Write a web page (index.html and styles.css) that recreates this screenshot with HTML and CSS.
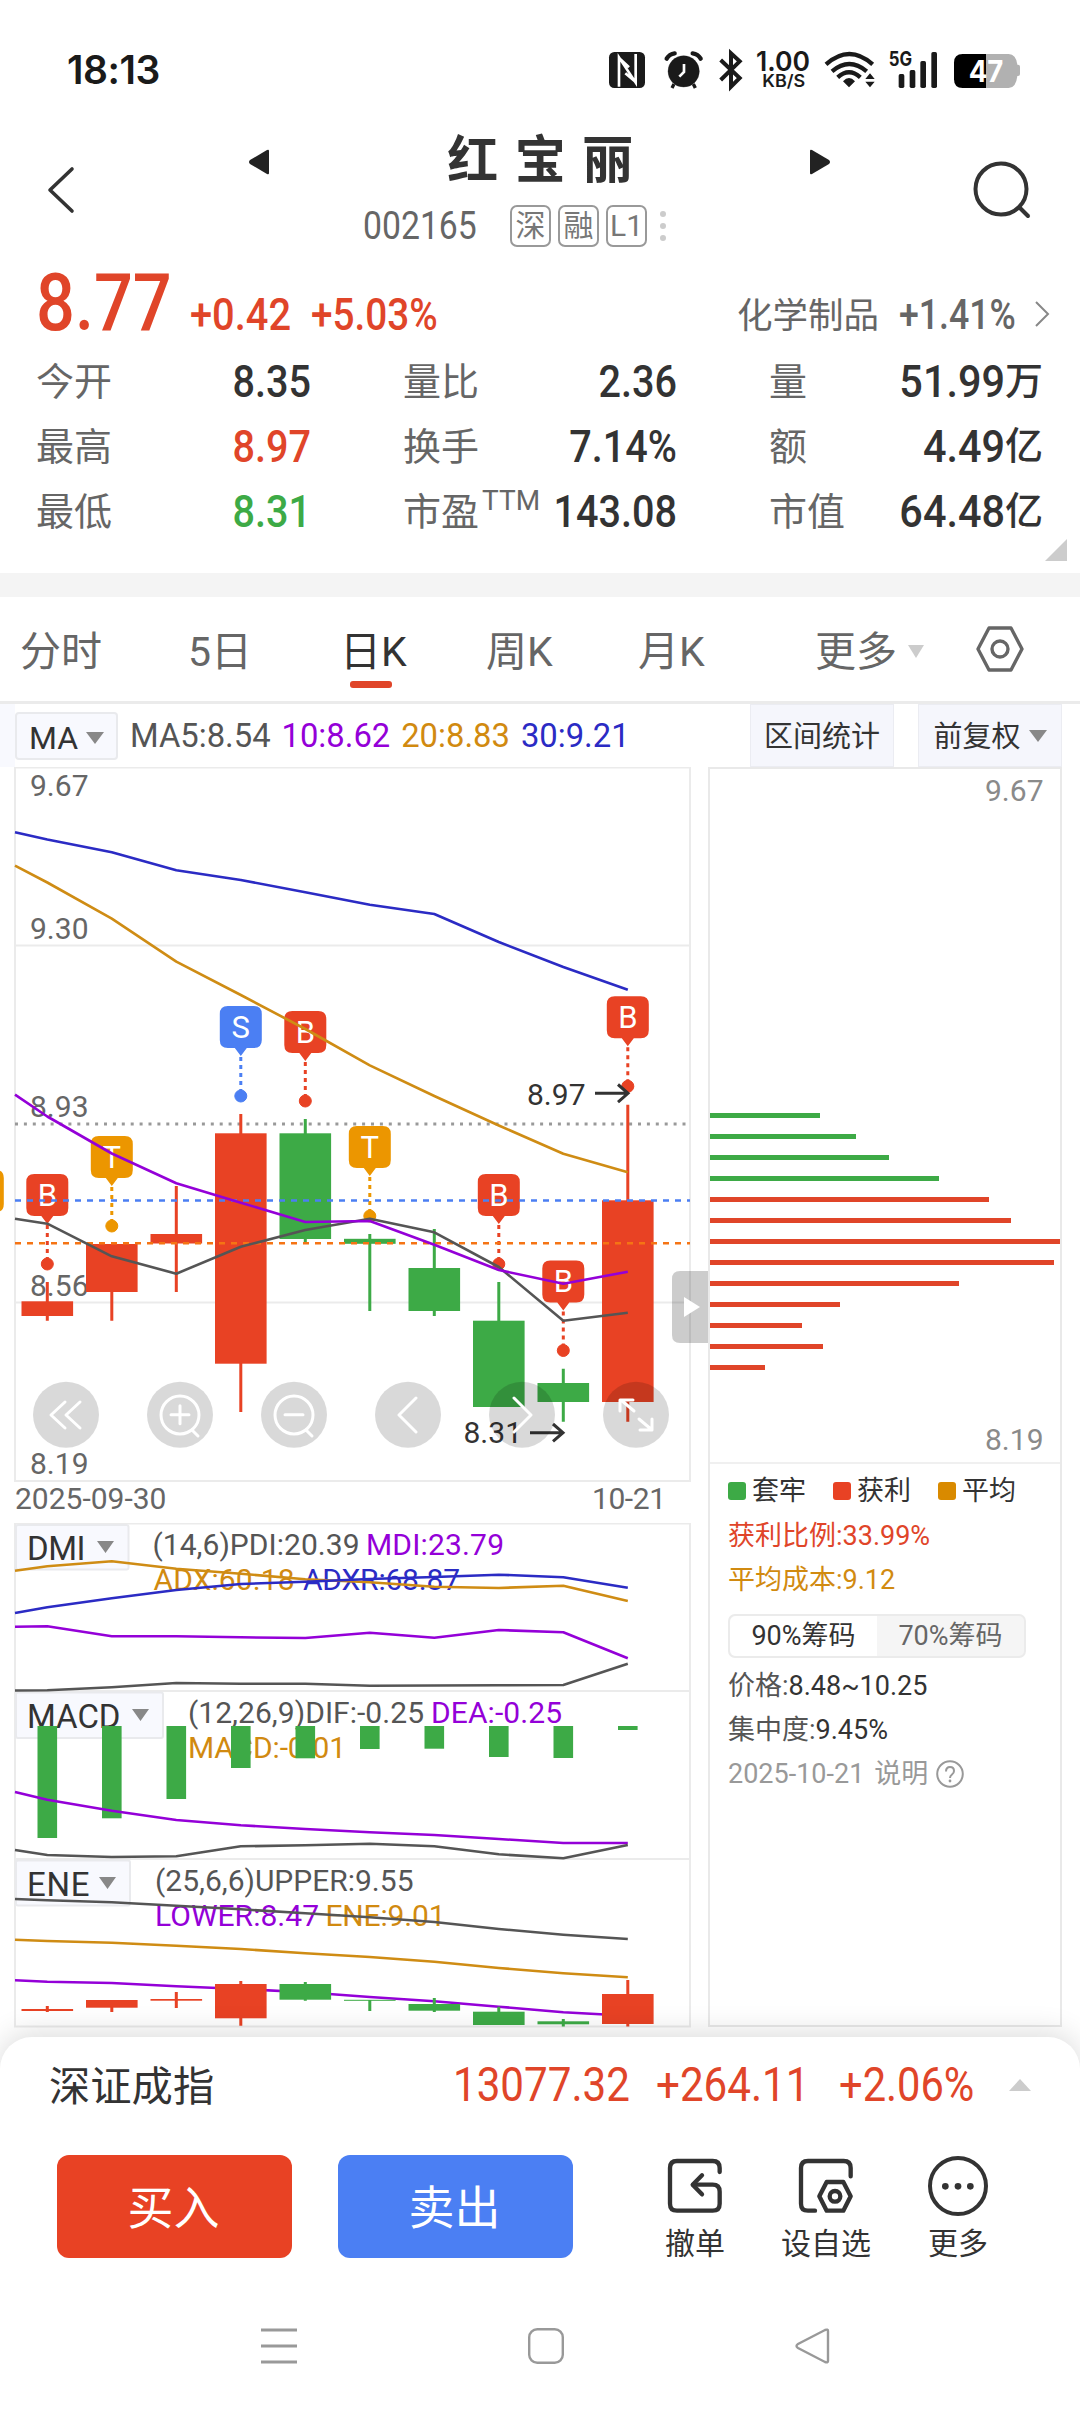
FILE: index.html
```html
<!DOCTYPE html>
<html lang="zh-CN">
<head>
<meta charset="utf-8">
<title>红宝丽 002165</title>
<link rel="stylesheet" href="styles.css">
</head>
<body>
<div class="status">
  <span class="clock">18:13</span>
  <svg class="status-icons" viewBox="0 0 1320 180" width="440" height="60">
    <rect x="27" y="36" width="108" height="108" rx="16" fill="#1a1a1a"/>
    <path d="M57 140V52l50 76V42M57 54l30 28M107 126L76 100" fill="none" stroke="#fff" stroke-width="8"/>
    <g fill="#1a1a1a" stroke="#1a1a1a">
      <circle cx="251" cy="94" r="47"/>
      <path d="M200 56q8-14 24-16M302 56q-8-14-24-16" fill="none" stroke-width="13" stroke-linecap="round"/>
      <path d="M222 132l-6 12M280 132l6 12" stroke-width="10"/>
    </g>
    <path d="M252 72v24l-14 14" fill="none" stroke="#fff" stroke-width="8"/>
    <path d="M362 60l57 54-26 26V40l26 24-57 56" fill="none" stroke="#1a1a1a" stroke-width="12"/>
    <g fill="#1a1a1a" class="st-text">
      <text x="468" y="92" font-size="80" font-weight="600" textLength="162" lengthAdjust="spacingAndGlyphs">1.00</text>
      <text x="487" y="141" font-size="51" font-weight="600" textLength="129" lengthAdjust="spacingAndGlyphs">KB/S</text>
      <text x="866" y="79" font-size="60" font-weight="700" textLength="70" lengthAdjust="spacingAndGlyphs">5G</text>
    </g>
    <g fill="none" stroke="#1a1a1a" stroke-width="13">
      <path d="M678 73q70-62 140 0M696 94q52-44 104 0M713 112q34-30 68 0"/>
    </g>
    <path d="M729 124q18-20 36 0l-18 18zM796 117l14-17 14 17zM796 125l14 17 14-17z" fill="#1a1a1a"/>
    <g fill="#1a1a1a"><rect x="896" y="102" width="17" height="42" rx="5"/><rect x="929" y="90" width="17" height="54" rx="5"/><rect x="961" y="63" width="17" height="81" rx="5"/><rect x="994" y="36" width="17" height="108" rx="5"/></g>
    <path d="M1158 42h68q22 0 26 32h2q6 0 6 6v22q0 6-6 6h-2q-4 36-26 36h-68z" fill="#b1b1b1"/>
    <path d="M1158 42h-70q-26 0-26 26v50q0 26 26 26h70z" fill="#000"/>
    <text class="st-text" x="1106" y="127" font-size="90" font-weight="700" fill="#fff" textLength="104" lengthAdjust="spacingAndGlyphs">47</text>
  </svg>
</div>

<header class="head">
  <svg class="back" viewBox="0 0 30 50" width="30" height="50"><path d="M26 4L4 25l22 21" fill="none" stroke="#333" stroke-width="3.6" stroke-linecap="round" stroke-linejoin="round"/></svg>
  <div class="head-mid">
    <div class="title-row">
      <svg viewBox="0 0 22 26" width="22" height="26"><path d="M21 2v22q0 2-2 1L2 15q-2-2 0-4L19 1q2-1 2 1z" fill="#222"/></svg>
      <h1>红宝丽</h1>
      <svg viewBox="0 0 22 26" width="22" height="26"><path d="M1 2v22q0 2 2 1l17-10q2-2 0-4L3 1Q1 0 1 2z" fill="#222"/></svg>
    </div>
    <div class="code-row">
      <span class="code">002165</span>
      <span class="tag">深</span><span class="tag">融</span><span class="tag">L1</span>
      <svg class="dots" viewBox="0 0 6 30" width="6" height="30"><g fill="#ccc"><circle cx="3" cy="3" r="3"/><circle cx="3" cy="15" r="3"/><circle cx="3" cy="27" r="3"/></g></svg>
    </div>
  </div>
  <svg class="search" viewBox="0 0 60 60" width="60" height="60"><g fill="none" stroke="#333" stroke-width="4" stroke-linecap="round"><circle cx="29" cy="29" r="25.5"/><path d="M48 48l8 8"/></g></svg>
</header>

<section class="quote">
  <div class="price-row">
    <span class="price red">8.77</span>
    <span class="chg red">+0.42</span>
    <span class="pct red">+5.03%</span>
    <span class="sector">化学制品</span>
    <span class="sector-pct">+1.41%</span>
    <svg class="chev" viewBox="0 0 16 28" width="16" height="28"><path d="M2 2l12 12L2 26" fill="none" stroke="#888" stroke-width="2"/></svg>
  </div>
  <div class="stats">
    <div class="stat"><span>今开</span><b>8.35</b></div>
    <div class="stat"><span>量比</span><b>2.36</b></div>
    <div class="stat"><span>量</span><b>51.99</b><i>万</i></div>
    <div class="stat"><span>最高</span><b class="red">8.97</b></div>
    <div class="stat"><span>换手</span><b>7.14%</b></div>
    <div class="stat"><span>额</span><b>4.49</b><i>亿</i></div>
    <div class="stat"><span>最低</span><b class="green">8.31</b></div>
    <div class="stat"><span>市盈<sup>TTM</sup></span><b>143.08</b></div>
    <div class="stat"><span>市值</span><b>64.48</b><i>亿</i></div>
  </div>
  <div class="corner"></div>
</section>

<nav class="tabs">
  <span>分时</span><span>5日</span><span class="on">日K</span><span>周K</span><span>月K</span>
  <span class="more">更多<i class="tri light"></i></span>
  <svg viewBox="0 0 48 46" width="48" height="46"><g fill="none" stroke="#666" stroke-width="3.4" stroke-linejoin="round"><path d="M13 2h22l11 21-11 21H13L2 23z"/><circle cx="24" cy="23" r="8"/></g></svg>
</nav>

<div class="toolbar">
  <div class="edge"></div>
  <div class="pick">MA<i class="tri"></i></div>
  <div class="ma"><span class="c-gray">MA5:8.54</span><span class="c-purple">10:8.62</span><span class="c-gold">20:8.83</span><span class="c-blue">30:9.21</span></div>
  <div class="tool">区间统计</div>
  <div class="tool adj">前复权<i class="tri"></i></div>
</div>

<main class="charts">
  <div class="left">
    <svg class="kline" viewBox="0 767 709 756" width="709" height="756">
      <defs>
        <g id="badge"><path d="M-13-45h26q8 0 8 8v26q0 8-8 8H6L0 5-6-3h-7q-8 0-8-8v-26q0-8 8-8z" stroke="none"/><path class="stem" d="M0 6V40"/><circle cy="45" r="6"/></g>
        <g id="disc"><circle r="33" fill="#000" fill-opacity=".15"/></g>
      </defs>
      <g class="frame"><rect x="15" y="767.5" width="675" height="713.5"/><path d="M15 945.5h675M15 1302.5h675"/></g>
      <path d="M15 1124h675" stroke="#999" stroke-width="2.8" stroke-dasharray="3 5.9" fill="none"/>
      <g class="axis">
        <text x="30" y="795.5">9.67</text><text x="30" y="939">9.30</text><text x="30" y="1117">8.93</text><text x="30" y="1296">8.56</text><text x="30" y="1474">8.19</text>
      </g>
      <g class="up">
        <path d="M47.3 1282v38.7M111.8 1244v76.7M176.3 1186v106M240.8 1114v298M627.8 1104.7v317"/>
        <rect x="21.5" y="1301.3" width="51.6" height="14.7"/><rect x="86" y="1244" width="51.6" height="48"/><rect x="150.5" y="1234" width="51.6" height="9.5"/><rect x="215" y="1133.3" width="51.6" height="230.4"/><rect x="602" y="1200.3" width="51.6" height="201.7"/>
      </g>
      <g class="down">
        <path d="M305.3 1119v123M369.8 1234v77M434.3 1229v87M498.8 1282v100M563.3 1368.7v53"/>
        <rect x="279.5" y="1133.3" width="51.6" height="105.7"/><rect x="344" y="1238.8" width="51.6" height="5"/><rect x="408.5" y="1268" width="51.6" height="43"/><rect x="473" y="1320.7" width="51.6" height="86.3"/><rect x="537.5" y="1383" width="51.6" height="19"/>
      </g>
      <g fill="#e84224" stroke="#e84224">
        <use href="#badge" x="47.3" y="1219"/><use href="#badge" x="305.3" y="1056"/><use href="#badge" x="498.8" y="1219"/><use href="#badge" x="563.3" y="1305.5"/><use href="#badge" x="627.8" y="1041.3"/>
      </g>
      <g fill="#4b7ff3" stroke="#4b7ff3"><use href="#badge" x="240.8" y="1051"/></g>
      <g fill="#ec9600" stroke="#ec9600"><use href="#badge" x="-17.2" y="1215"/><use href="#badge" x="111.8" y="1181"/><use href="#badge" x="369.8" y="1171"/></g>
      <g class="letters">
        <text x="47.3" y="1205.5">B</text><text x="305.3" y="1042.5">B</text><text x="498.8" y="1205.5">B</text><text x="563.3" y="1292">B</text><text x="627.8" y="1028">B</text><text x="240.8" y="1037.5">S</text><text x="111.8" y="1167.5">T</text><text x="369.8" y="1157.5">T</text>
      </g>
      <path d="M15 1200.5h675" stroke="#4b7ff3" stroke-width="2.4" stroke-dasharray="6 6" fill="none"/>
      <path d="M15 1243.3h675" stroke="#f57414" stroke-width="2.4" stroke-dasharray="6 6" fill="none"/>
      <g class="line">
        <path class="gray" d="M15 1218.7L47.3 1223.7 111.8 1256.3 176.3 1273.7 240.8 1246.7 305.3 1230 369.8 1218.7 434.3 1232.3 498.8 1267 563.3 1320.7 627.8 1312.7"/>
        <path class="purple" d="M15 1094.7L47.3 1116.5 111.8 1153.5 176.3 1183.3 240.8 1202.7 305.3 1222 369.8 1221 434.3 1244.7 498.8 1270 563.3 1283.7 627.8 1271.7"/>
        <path class="gold" d="M15 865.7L47.3 882.5 111.8 918.7 176.3 961.7 240.8 995 305.3 1029 369.8 1065.3 434.3 1096 498.8 1125.5 563.3 1153.7 627.8 1172.3"/>
        <path class="blue" d="M15 832.3L47.3 839.5 111.8 852.3 176.3 870.3 240.8 880 305.3 892.3 369.8 904.7 434.3 914 498.8 942 563.3 967 627.8 989.7"/>
      </g>
      <g class="mark">
        <text x="527" y="1104.5">8.97</text><path d="M595 1093.3h32M618 1084.5l10 8.8-10 8.8"/>
        <text x="463.5" y="1443">8.31</text><path d="M530 1432.7h32M553 1424l10 8.7-10 8.7"/>
      </g>
      <use href="#disc" x="66" y="1414.7"/><use href="#disc" x="180" y="1414.7"/><use href="#disc" x="294" y="1414.7"/><use href="#disc" x="408" y="1414.7"/><use href="#disc" x="522" y="1414.7"/><use href="#disc" x="636" y="1414.7"/>
      <g class="glyph">
        <path d="M65 1402l-14 13 14 13M80 1402l-14 13 14 13"/>
        <circle cx="180" cy="1415" r="19"/><path d="M171 1414.7h18M180 1405.7v18M192 1430l6 6"/>
        <circle cx="294" cy="1415" r="19"/><path d="M285 1414.7h18M306 1430l6 6"/>
        <path d="M416 1398l-17 17 17 17M514 1398l17 17-17 17"/>
        <path d="M634 1411l-13-11M620 1411v-11h13M639 1419l13 11M640 1430h12v-11"/>
      </g>
      <path d="M708 1271h-28q-8 0-8 8v56q0 8 8 8h28z" fill="#000" fill-opacity=".2"/>
      <path d="M684 1297l16 10-16 10z" fill="#fff"/>
      <g class="axis"><text x="15" y="1509">2025-09-30</text><text x="592" y="1509" textLength="74">10-21</text></g>
    </svg>

    <svg class="subs" viewBox="0 1523 709 514" width="709" height="514">
      <g class="frame"><rect x="15" y="1523.5" width="675" height="503"/><path d="M15 1691h675M15 1859h675"/></g>
      <g class="box"><rect x="16" y="1525" width="112.5" height="44.5" rx="2"/><rect x="16" y="1692.5" width="147" height="45.5" rx="2"/><rect x="16" y="1860.5" width="114" height="45" rx="2"/></g>
      <g class="boxt"><text x="27" y="1560" textLength="58.5">DMI</text><text x="27" y="1727.7" textLength="93.5">MACD</text><text x="27" y="1895.7" textLength="62.5">ENE</text></g>
      <path d="M97 1541h17l-8.5 12zM132 1709h17l-8.5 12zM99 1877h17l-8.5 12z" fill="#888"/>
      <g class="legend">
        <text x="152.5" y="1555" class="c-gray" textLength="207">(14,6)PDI:20.39</text><text x="366" y="1555" class="c-purple" textLength="138">MDI:23.79</text>
        <text x="153.5" y="1590" class="c-gold" textLength="141">ADX:60.18</text><text x="303" y="1590" class="c-blue" textLength="157">ADXR:68.87</text>
        <text x="188" y="1722.7" class="c-gray" textLength="236">(12,26,9)DIF:-0.25</text><text x="431" y="1722.7" class="c-purple" textLength="131">DEA:-0.25</text>
        <text x="188" y="1757.7" class="c-gold" textLength="158">MACD:-0.01</text>
        <text x="155" y="1891" class="c-gray" textLength="258.5">(25,6,6)UPPER:9.55</text>
        <text x="155" y="1926" class="c-purple" textLength="164">LOWER:8.47</text><text x="325.5" y="1926" class="c-gold" textLength="120">ENE:9.01</text>
      </g>
      <g fill="#3daa46"><rect x="37.5" y="1726" width="19.6" height="112"/><rect x="102" y="1726" width="19.6" height="92.3"/><rect x="166.5" y="1726" width="19.6" height="73"/><rect x="231" y="1726" width="19.6" height="42"/><rect x="295.5" y="1726" width="19.6" height="32.3"/><rect x="360" y="1726" width="19.6" height="23"/><rect x="424.5" y="1726" width="19.6" height="22.7"/><rect x="489" y="1726" width="19.6" height="31"/><rect x="553.5" y="1726" width="19.6" height="32"/><rect x="618" y="1726" width="19.6" height="4"/></g>
      <g class="line">
        <path class="gold" d="M15 1570.7L47.3 1566.3 111.8 1561.3 176.3 1568.7 240.8 1573.7 305.3 1579.3 369.8 1582.3 434.3 1586.7 498.8 1588 563.3 1585.7 627.8 1601"/>
        <path class="blue" d="M15 1613L47.3 1607.3 111.8 1598.3 176.3 1590 240.8 1584 305.3 1581.7 369.8 1579 434.3 1577 498.8 1574.7 563.3 1577.3 627.8 1587.7"/>
        <path class="purple" d="M15 1626.7L47.3 1626.3 111.8 1636.3 176.3 1636.3 240.8 1637.3 305.3 1638 369.8 1632.7 434.3 1637.7 498.8 1630 563.3 1632.3 627.8 1658.3"/>
        <path class="gray" d="M15 1690.5L47.3 1690.3 111.8 1687.3 176.3 1683 240.8 1683.7 305.3 1683.7 369.8 1685.7 434.3 1685.5 498.8 1685.3 563.3 1685 627.8 1663.7"/>
        <path class="purple" d="M15 1792L47.3 1799.7 111.8 1810.7 176.3 1820 240.8 1825.3 305.3 1829 369.8 1832.3 434.3 1835 498.8 1839 563.3 1843 627.8 1843"/>
        <path class="gray" d="M15 1850L47.3 1855 111.8 1857 176.3 1856.3 240.8 1846.3 305.3 1845.3 369.8 1843.7 434.3 1846.3 498.8 1854.3 563.3 1858.3 627.8 1845"/>
        <path class="gray" d="M15 1899L47.3 1900.3 111.8 1902.3 176.3 1905.7 240.8 1909.3 305.3 1913.3 369.8 1917.3 434.3 1922 498.8 1929 563.3 1934.7 627.8 1939"/>
        <path class="gold" d="M15 1939.7L47.3 1941 111.8 1942.7 176.3 1945.7 240.8 1949 305.3 1953.3 369.8 1957 434.3 1961.7 498.8 1968 563.3 1973.3 627.8 1977.3"/>
        <path class="purple" d="M15 1980.3L47.3 1981.7 111.8 1983 176.3 1986.3 240.8 1989 305.3 1992.3 369.8 1997 434.3 2001.3 498.8 2006.7 563.3 2012.3 627.8 2015.7"/>
      </g>
      <g class="up">
        <path d="M47.3 2006v6M111.8 2007v5M176.3 1992v16M240.8 1981v44.7M627.8 1980v46.5"/>
        <rect x="21.5" y="2009" width="51.6" height="2"/><rect x="86" y="2000" width="51.6" height="7.7"/><rect x="150.5" y="1999" width="51.6" height="1.7"/><rect x="215" y="1984" width="51.6" height="34.3"/><rect x="602" y="1994" width="51.6" height="30"/>
      </g>
      <g class="down">
        <path d="M305.3 1982v18.7M369.8 2000v11M434.3 1998v14M498.8 2006.7v10M563.3 2019v7.5"/>
        <rect x="279.5" y="1984" width="51.6" height="15.7"/><rect x="344" y="1999.8" width="51.6" height="1"/><rect x="408.5" y="2004" width="51.6" height="6.7"/><rect x="473" y="2011.7" width="51.6" height="13.3"/><rect x="537.5" y="2021.3" width="51.6" height="3"/>
      </g>
    </svg>
  </div>

  <aside class="chips">
    <svg class="chip-chart" viewBox="708 767 353 695" width="353" height="695">
      <g fill="#8a8a8a" font-size="30"><text x="985" y="801">9.67</text><text x="985" y="1449.5">8.19</text></g>
      <g fill="#3daa46"><rect x="710" y="1113" width="110" height="5"/><rect x="710" y="1134" width="146" height="5"/><rect x="710" y="1155" width="179" height="5"/><rect x="710" y="1176" width="229" height="5"/></g>
      <g fill="#e04529"><rect x="710" y="1197" width="279" height="5"/><rect x="710" y="1218" width="301" height="5"/><rect x="710" y="1239" width="350" height="5"/><rect x="710" y="1260" width="344" height="5"/><rect x="710" y="1281" width="249" height="5"/><rect x="710" y="1302" width="130" height="5"/><rect x="710" y="1323" width="92" height="5"/><rect x="710" y="1344" width="113" height="5"/><rect x="710" y="1365" width="55" height="5"/></g>
    </svg>
    <div class="chip-info">
      <div class="keys"><span><i class="k-green"></i>套牢</span><span><i class="k-red"></i>获利</span><span><i class="k-gold"></i>平均</span></div>
      <div class="row red">获利比例:33.99%</div>
      <div class="row c-gold">平均成本:9.12</div>
      <div class="seg"><span class="sel">90%筹码</span><span>70%筹码</span></div>
      <div class="row"><em>价格:</em>8.48~10.25</div>
      <div class="row"><em>集中度:</em>9.45%</div>
      <div class="row dim">2025-10-21<span>说明</span><svg viewBox="0 0 28 28" width="28" height="28"><circle cx="14" cy="14" r="12.8" fill="none" stroke="#999" stroke-width="2"/><path d="M10 11.500q0-4.500 4-4.500t4 4q0 2-2 3.500t-2 3.500" fill="none" stroke="#999" stroke-width="2"/><circle cx="14" cy="21" r="1.4" fill="#999"/></svg></div>
    </div>
  </aside>
</main>

<footer class="sheet">
  <div class="index">
    <span class="idx-name">深证成指</span>
    <span class="n n1">13077.32</span><span class="n n2">+264.11</span><span class="n n3">+2.06%</span>
    <i class="tri-up"></i>
  </div>
  <div class="actions">
    <button class="buy">买入</button>
    <button class="sell">卖出</button>
    <div class="act a1"><svg viewBox="75 48 180 180" width="60" height="60"><g fill="none" stroke="#333" stroke-width="13" stroke-linecap="round" stroke-linejoin="round"><path d="M239 96V84q0-21-21-21H111q-21 0-21 21v107q0 21 21 21H218q21 0 21-21V155q0-21-21-21H160"/><path d="M186 106l-28 28 28 29"/></g></svg><span>撤单</span></div>
    <div class="act a2"><svg viewBox="468 48 180 180" width="60" height="60"><g fill="none" stroke="#333" stroke-width="13" stroke-linecap="round" stroke-linejoin="round"><path d="M632 109V84q0-21-21-21H504q-21 0-21 21v107q0 21 21 21h21"/><path d="M560 126h50l22 43-22 43h-50l-22-43z"/><circle cx="585" cy="169" r="16"/></g></svg><span>设自选</span></div>
    <div class="act a3"><svg viewBox="864 48 180 180" width="60" height="60"><circle cx="954" cy="138" r="84" fill="none" stroke="#333" stroke-width="12"/><g fill="#333"><circle cx="916" cy="139" r="10"/><circle cx="954" cy="139" r="10"/><circle cx="991" cy="139" r="10"/></g></svg><span>更多</span></div>
  </div>
  <div class="sysnav">
    <svg viewBox="0 0 36 36" width="36" height="36"><path d="M0 2h36M0 18h36M0 34h36" stroke="#999" stroke-width="3"/></svg>
    <svg viewBox="0 0 36 36" width="36" height="36"><rect x="1.2" y="1.2" width="33.6" height="33.6" rx="8" fill="none" stroke="#999" stroke-width="2.4"/></svg>
    <svg viewBox="0 0 36 36" width="36" height="36"><path d="M33 3v30q0 2-3 1L3 20q-3-2 0-4L30 2q3-1 3 1z" fill="none" stroke="#999" stroke-width="2.4"/></svg>
  </div>
</footer>
</body>
</html>
```
FILE: styles.css
```css
* { box-sizing: border-box; margin: 0; padding: 0; }
body { width: 1080px; height: 2412px; overflow: hidden; background: #fff; color: #333; font-family: Roboto, "Noto Sans CJK SC", sans-serif; }
svg { display: block; flex: none; }
i, em { font-style: normal; }
.red { color: #e04529; }
.green { color: #3daa46; }
.c-gray { color: #555; fill: #555; }
.c-purple { color: #9400d8; fill: #9400d8; }
.c-gold { color: #d18a10; fill: #d18a10; }
.c-blue { color: #2b2bc4; fill: #2b2bc4; }

.status { height: 120px; display: flex; justify-content: space-between; padding: 40px 40px 0 67px; }
.clock { font: 600 39px/60px Inter, sans-serif; color: #1a1a1a; letter-spacing: -.5px; }
.st-text { font-family: Inter, sans-serif; }

.head { height: 142px; display: flex; padding-left: 46px; }
.back { margin-top: 45px; }
.head-mid { width: 896px; display: flex; flex-direction: column; }
.title-row { display: flex; align-items: center; height: 82px; padding-left: 172px; }
.title-row svg { position: relative; top: 1px; }
.title-row h1 { width: 539px; text-align: center; font-size: 51px; line-height: 76px; letter-spacing: 16.5px; padding-left: 18px; font-weight: 700; }
.code-row { display: flex; height: 52px; align-items: center; padding-left: 287px; margin-top: -2px; }
.code { width: 147px; font-size: 39px; color: #666; transform: scaleX(.865); transform-origin: left; }
.tag { width: 41px; height: 42px; border: 2px solid #999; border-radius: 7px; margin-right: 7px; font-size: 30px; line-height: 37px; text-align: center; color: #777; }
.dots { margin-left: 6px; }
.search { margin-top: 40px; }

.quote { height: 311px; position: relative; }
.price-row { height: 88px; display: flex; padding-left: 36px; white-space: nowrap; font-weight: 500; }
.price-row span { transform-origin: left; }
.price { width: 154px; font-size: 80px; line-height: 82px; transform: scaleX(.855); }
.chg { width: 121px; font-size: 45px; line-height: 105px; transform: scaleX(.885); }
.pct { width: 426px; font-size: 45px; line-height: 105px; transform: scaleX(.86); }
.sector { width: 162px; font-size: 35.5px; line-height: 108px; color: #666; font-weight: 400; }
.sector-pct { width: 135px; font-size: 42px; line-height: 105px; color: #666; transform: scaleX(.85); }
.chev { margin-top: 38px; }
.stats { display: grid; grid-template-columns: 275px 274px 274px; column-gap: 92px; grid-auto-rows: 65px; padding-left: 36px; }
.stat { display: flex; height: 65px; line-height: 64px; white-space: nowrap; }
.stat span { flex: 1; font-size: 38px; color: #666; }
.stat sup { font-size: 28px; line-height: 0; vertical-align: 15px; margin-left: 3px; }
.stat b { font-size: 45px; font-weight: 500; transform: scaleX(.88); transform-origin: right; line-height: 63px; width: 0; display: flex; justify-content: flex-end; }
.stat b:not(:last-child) { transform: scaleX(.92); }
.stat i { font-size: 38px; font-weight: 500; width: 38px; line-height: 63px; }
.corner { position: absolute; left: 1045px; top: 277px; border: 11.5px solid; border-color: transparent #ccc #ccc transparent; }

.tabs { height: 131px; border-top: 24px solid #f4f4f4; border-bottom: 3px solid #ebebeb; display: grid; grid-template-columns: 168px 152px 146px 152px 177px 159px 48px; padding-left: 20px; line-height: 110px; font-size: 41px; color: #666; }
.tabs svg { margin: 29px 0 0 2px; }
.tabs .on { color: #333; position: relative; }
.tabs .on::after { content: ""; position: absolute; left: 10px; top: 84px; width: 42px; height: 7px; border-radius: 3px; background: #e04529; }
.tri { display: inline-block; border: solid transparent; border-width: 12px 9px 0; border-top-color: #888; margin-left: 8px; vertical-align: 5px; }
.tri.light { border-top-color: #ccc; margin-left: 11px; border-width: 13px 8.5px 0; vertical-align: 8px; }

.toolbar { height: 63px; display: flex; white-space: nowrap; }
.edge { width: 15px; background: #f8f9fe; }
.pick { width: 103px; height: 48px; margin-top: 8px; border: 2px solid #e9eaed; border-radius: 4px; background: #f8f9fe; font-size: 32px; line-height: 48px; padding-left: 12px; }
.ma { width: 632px; padding-left: 12px; display: flex; font-size: 32.8px; line-height: 64px; }
.ma span { width: 119.7px; }
.ma span:first-child { width: 151.5px; }
.tool { width: 144px; height: 63px; background: #f5f6fc; border: 1px solid #ebecf2; font-size: 29px; line-height: 64px; text-align: center; }
.adj { margin-left: 24px; }

.charts { display: flex; height: 1270px; }
.kline text, .subs text { font-size: 30px; }
.frame { fill: none; stroke: #ebebeb; stroke-width: 2; }
.axis { fill: #666; }
.stem { stroke-width: 3; stroke-dasharray: 4 4; }
use circle { stroke: none; }
.kline .letters text { fill: #fff; text-anchor: middle; font-size: 31px; }
.up { fill: #e84224; }
.up path { stroke: #e84224; stroke-width: 3; }
.down { fill: #3daa46; }
.down path { stroke: #3daa46; stroke-width: 3; }
.line { fill: none; stroke-width: 2.6; stroke-linejoin: round; }
.line .gray { stroke: #555; }
.line .purple { stroke: #9400d8; }
.line .gold { stroke: #cf8c14; }
.line .blue { stroke: #2b2bc4; }
.mark { fill: #333; }
.mark path { fill: none; stroke: #333; stroke-width: 3; }
.glyph { fill: none; stroke: #fff; stroke-width: 3; stroke-linecap: round; stroke-linejoin: round; }
.box { fill: #f8f9fe; stroke: #e9eaed; stroke-width: 2; }
.subs .boxt text { font-size: 33px; fill: #333; }

.chips { width: 354px; height: 1260px; border: 2px solid #e9e9e9; margin-left: -1px; }
.chip-chart { margin: -2px 0 0 -2px; }
.chip-info { border-top: 2px solid #f0f0f0; padding: 10px 0 0 18px; font-size: 27px; }
.keys { display: flex; height: 40px; line-height: 34px; }
.keys span { width: 105px; display: flex; align-items: center; height: 34px; }
.keys i { width: 18px; height: 18px; border-radius: 3px; margin-right: 6px; }
.k-green { background: #3daa46; }
.k-red { background: #e84224; }
.k-gold { background: #d98a00; }
.row { height: 44px; line-height: 44px; display: flex; align-items: center; }
.row em { color: #555; }
.seg { width: 298px; height: 44px; border: 2px solid #ebebeb; border-radius: 7px; margin: 12px 0 6px; display: flex; background: #f5f5f5; line-height: 40px; text-align: center; color: #666; }
.seg span { flex: 1; }
.seg .sel { background: #fff; color: #333; border-radius: 6px 0 0 6px; }
.dim { color: #999; }
.dim span { margin: 0 8px 0 10px; }

.sheet { position: relative; height: 375px; border-radius: 32px 32px 0 0; background: #fff; box-shadow: 0 -4px 30px rgba(0,0,0,.14); }
.index { height: 118px; display: flex; padding-left: 49px; line-height: 100px; white-space: nowrap; }
.idx-name { width: 404px; font-size: 41.3px; }
.n { font-size: 49px; line-height: 96px; color: #e04529; transform: scaleX(.86); transform-origin: left; }
.n1 { width: 203px; }
.n2 { width: 183px; }
.n3 { width: 170px; transform: scaleX(.85); }
.tri-up { border: solid transparent; border-width: 0 11px 12px; border-bottom-color: #ccc; height: 12px; margin-top: 42px; }
.actions { display: flex; padding-left: 57px; height: 173px; }
button { width: 235px; height: 103px; border: 0; border-radius: 12px; color: #fff; font: 46px/106px Roboto, "Noto Sans CJK SC", sans-serif; padding-right: 2px; }
.buy { background: #e84224; margin-right: 46px; }
.sell { background: #4b7ff3; margin-right: 57px; }
.act { width: 132px; display: flex; flex-direction: column; align-items: center; font-size: 30px; line-height: 40px; }
.act svg { position: relative; top: 1px; }
.act span { margin-top: 9px; }
.a1 { width: 130px; }
.sysnav { display: flex; padding-left: 261px; gap: 231px; }
```
